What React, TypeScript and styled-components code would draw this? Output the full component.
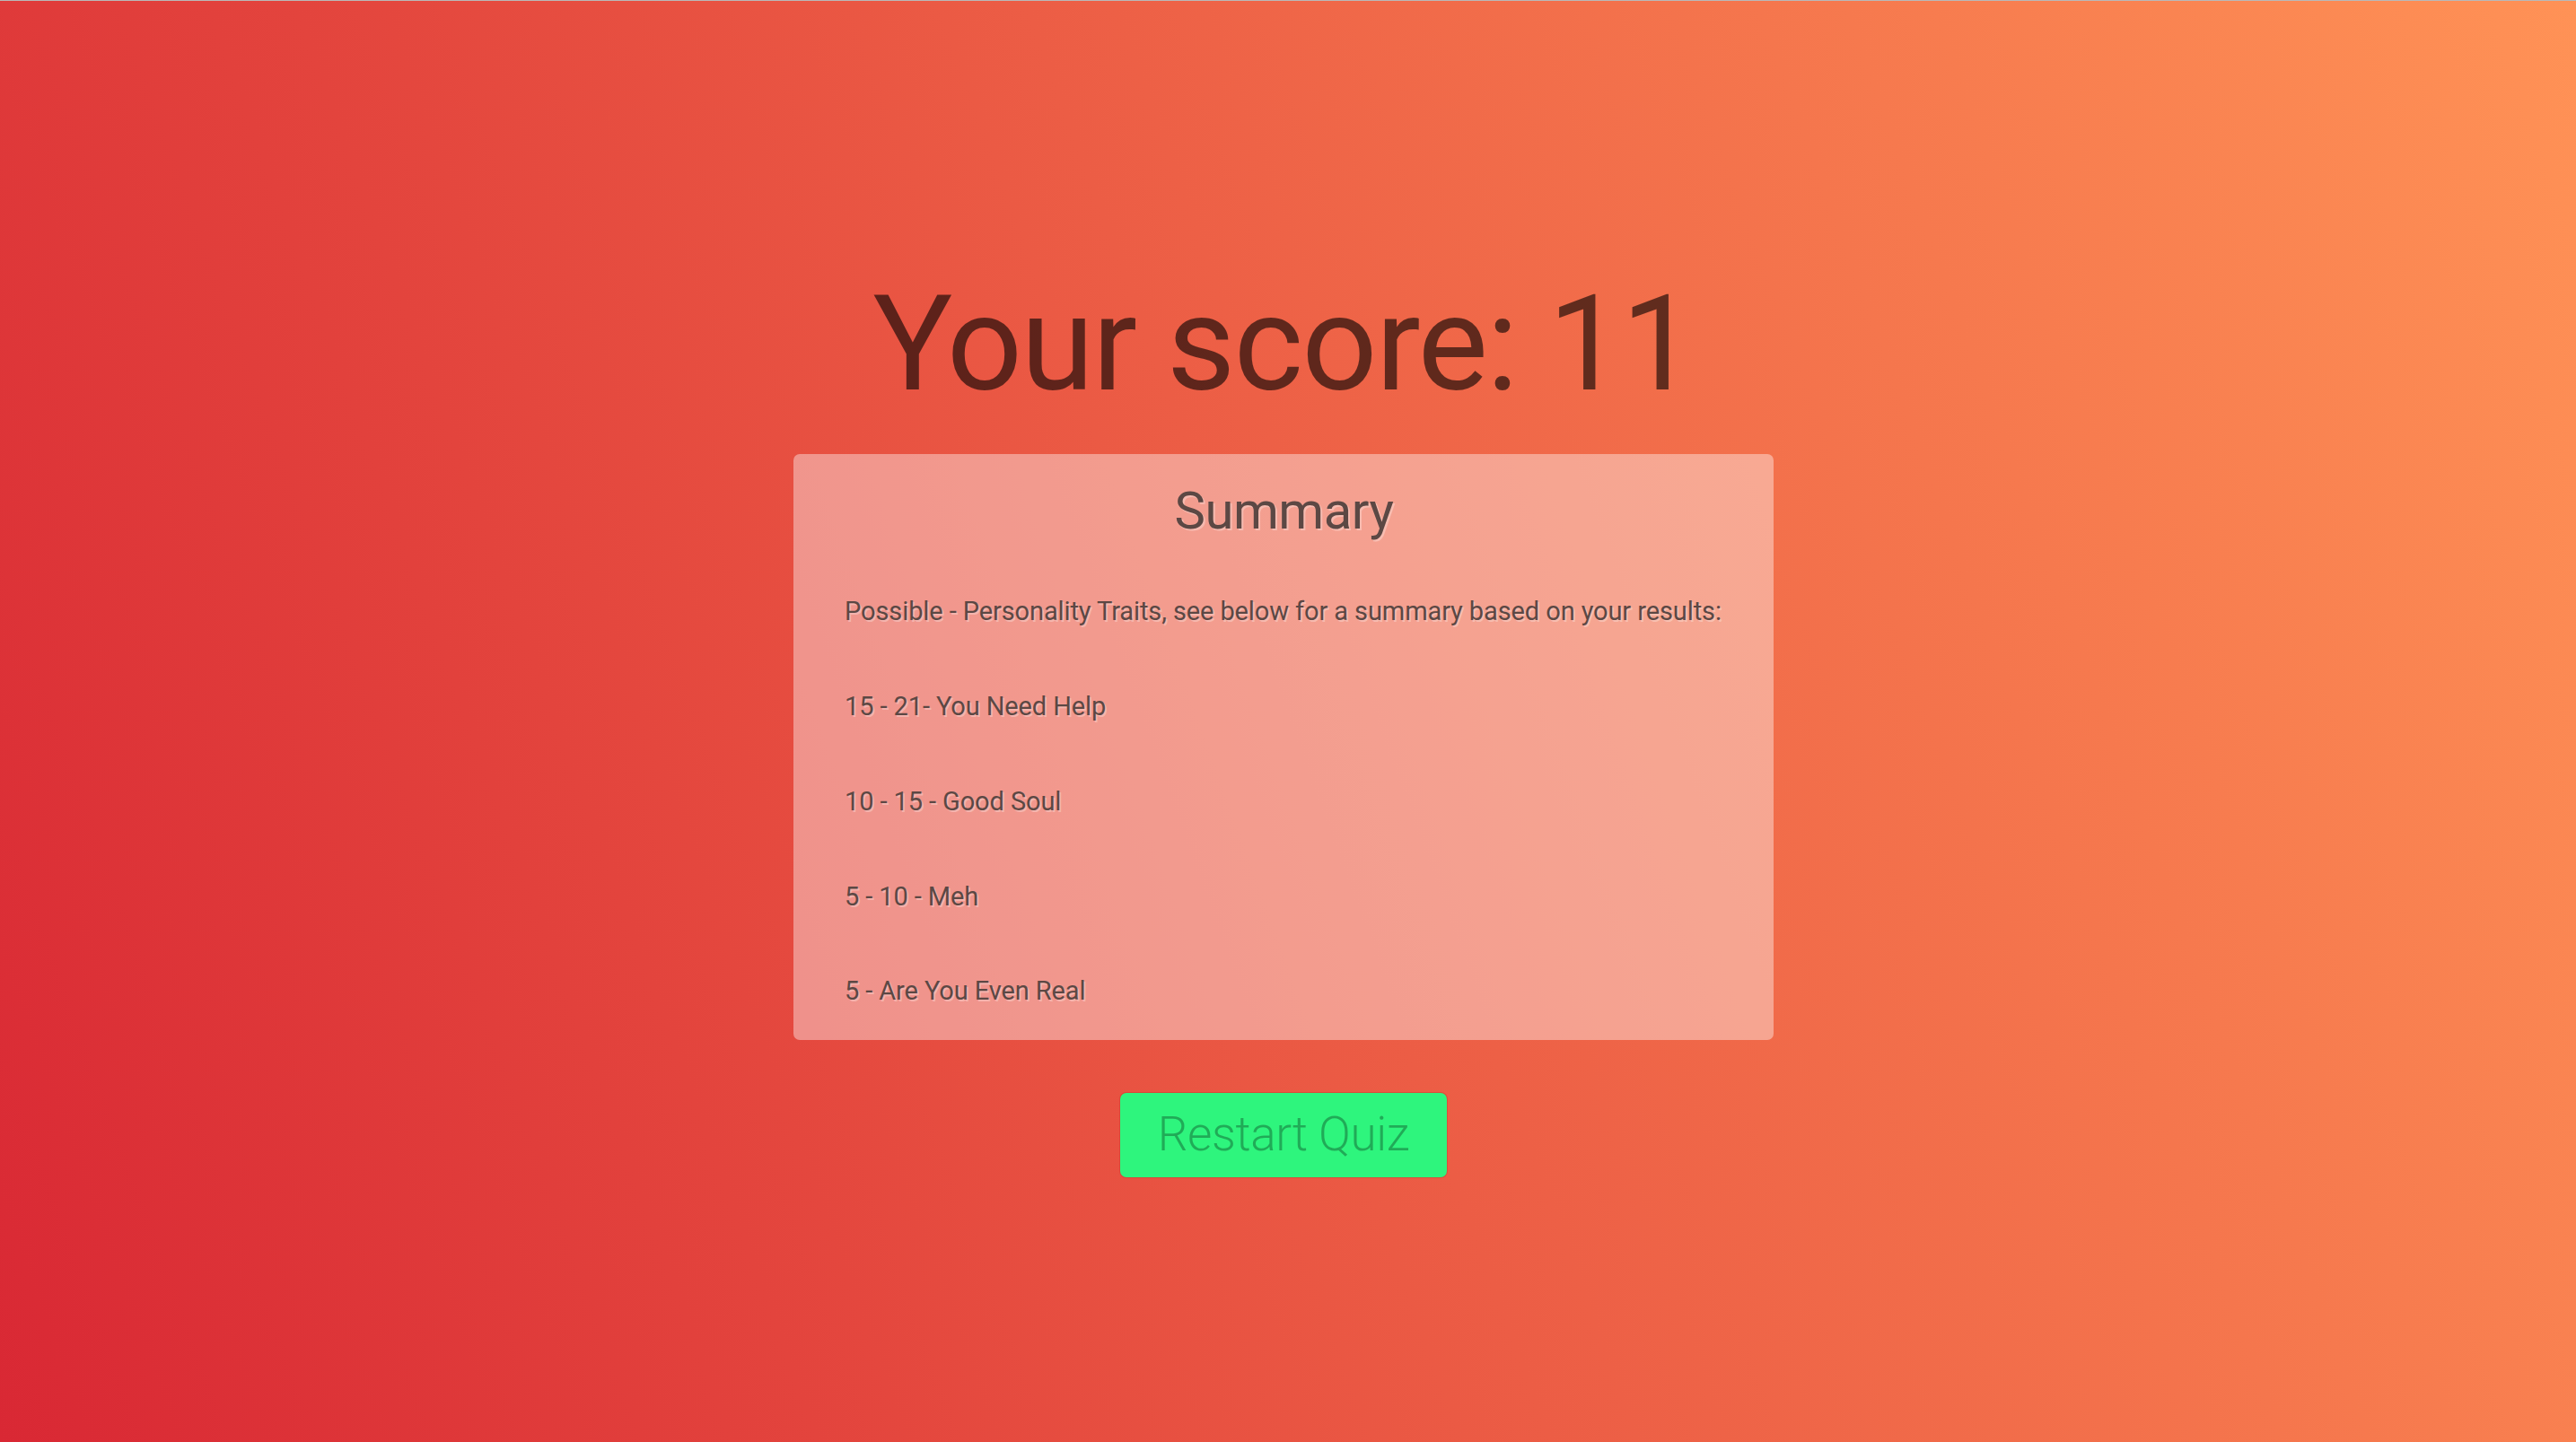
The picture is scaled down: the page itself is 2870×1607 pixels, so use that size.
import React from "react";
import styled, { createGlobalStyle } from "styled-components";

const GlobalStyle = createGlobalStyle`
  html, body {
    margin: 0;
    padding: 0;
    height: 100%;
  }
  body {
    font-family: Roboto, "Liberation Sans", sans-serif;
  }
  #root {
    min-height: 100%;
  }
`;

const Page = styled.main`
  box-sizing: border-box;
  width: 100%;
  height: 1607px;
  border-top: 1px solid #b9b9b9;
  background: linear-gradient(70deg, #d92834 0%, #ff9256 100%);
  display: flex;
  flex-direction: column;
  align-items: center;
  padding: 294px 10px 0 0;
  overflow: hidden;
`;

const Score = styled.h1`
  margin: 0;
  font-family: Roboto, "Liberation Sans", sans-serif;
  font-weight: 400;
  font-size: 148px;
  line-height: 1.2;
  color: rgba(0, 0, 0, 0.6);
  letter-spacing: -1.9px;
`;

const Card = styled.section`
  box-sizing: border-box;
  margin-top: 33px;
  width: 1092px;
  padding: 29px 56px 37px 57px;
  background: rgba(255, 255, 255, 0.4);
  border-radius: 7px;
  display: flex;
  flex-direction: column;
  gap: 71px;
  color: #5c4844;
  text-shadow: 2px 2px 0 rgba(255, 255, 255, 0.3);
`;

const CardTitle = styled.h2`
  margin: 0 0 -11px;
  text-align: center;
  font-weight: 400;
  font-size: 58px;
  line-height: 1.2;
  letter-spacing: -0.5px;
`;

const Line = styled.p`
  margin: 0;
  font-size: 29px;
  line-height: 1.2;
  font-weight: 400;
  letter-spacing: -0.1px;
  white-space: nowrap;
`;

const RestartButton = styled.button`
  margin-top: 59px;
  width: 364px;
  height: 94px;
  border: none;
  border-radius: 7px;
  background: #2ef57d;
  box-shadow: 0 0 0 1px rgba(190, 50, 40, 0.35);
  color: rgba(0, 0, 0, 0.3);
  font-family: Roboto, "Liberation Sans", sans-serif;
  font-weight: 300;
  font-size: 53px;
  letter-spacing: -0.4px;
  line-height: 1;
  cursor: pointer;
  display: flex;
  align-items: center;
  justify-content: center;
  padding: 0 0 2px;
`;

const ranges = [
  "15 - 21- You Need Help",
  "10 - 15 - Good Soul",
  "5 - 10 - Meh",
  "5 - Are You Even Real",
];

export default function App() {
  return (
    <>
      <GlobalStyle />
      <Page>
        <Score>Your score: 11</Score>
        <Card>
          <CardTitle>Summary</CardTitle>
          <Line>
            Possible - Personality Traits, see below for a summary based on your results:
          </Line>
          {ranges.map((r) => (
            <Line key={r}>{r}</Line>
          ))}
        </Card>
        <RestartButton>Restart Quiz</RestartButton>
      </Page>
    </>
  );
}
